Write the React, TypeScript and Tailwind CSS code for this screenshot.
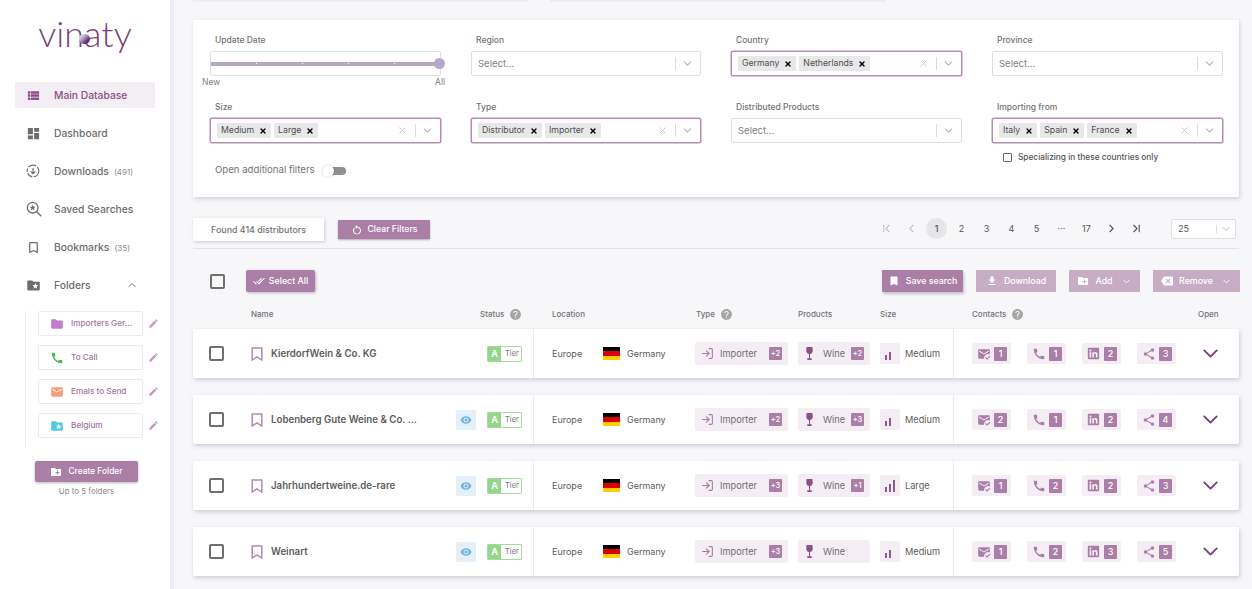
import { MdViewList, MdDashboard, MdBookmarkBorder, MdFolderSpecial, MdEdit, MdFolder, MdCall, MdEmail, MdCreateNewFolder, MdRestartAlt, MdDoneAll, MdBookmark, MdFileDownload, MdBackspace, MdVisibility, MdHelp, MdMarkEmailRead, MdShare } from 'react-icons/md'
import { FaLinkedin } from 'react-icons/fa'
import { LuChevronDown, LuChevronUp, LuChevronFirst, LuChevronLast, LuChevronLeft, LuChevronRight, LuLogIn, LuX } from 'react-icons/lu'

const FONT = "font-['Inter',sans-serif]"

function DownloadsIcon() {
  return (
    <svg width="14" height="14" viewBox="0 0 24 24" fill="none" stroke="currentColor" strokeWidth="2">
      <circle cx="12" cy="12" r="10" strokeDasharray="14 2.5 10 2.5 6 2.5" />
      <path d="M12 7v9M8 12.5l4 4 4-4" />
    </svg>
  )
}

function SavedSearchIcon() {
  return (
    <svg width="16" height="16" viewBox="0 0 24 24" fill="none" stroke="currentColor" strokeWidth="2">
      <circle cx="10" cy="10" r="8" />
      <path d="M16 16l7 7" />
      <path d="M10 5.5l1.3 3 3.2.3-2.4 2.1.7 3.1-2.8-1.6-2.8 1.6.7-3.1-2.4-2.1 3.2-.3z" fill="currentColor" stroke="none" />
    </svg>
  )
}

function WineIcon() {
  return (
    <svg className="shrink-0" width="7" height="13" viewBox="0 0 7 13" fill="#8e4f89">
      <path d="M.6 0h5.8l.4 3.4C6.9 5.4 5.4 6.7 4 6.9v4.4h1.7V13H1.3v-1.7H3V6.9C1.6 6.7.1 5.4.2 3.4z" />
    </svg>
  )
}

function SizeIcon({ large }: { large?: boolean }) {
  return (
    <div className="flex items-end gap-[2px] h-[12px]">
      <div className="w-[2px] h-[5px] bg-[#8e5a8b]" />
      <div className="w-[2px] h-[8px] bg-[#8e5a8b]" />
      <div className={large ? 'w-[2px] h-[12px] bg-[#8e5a8b]' : 'w-[2px] h-[12px] bg-transparent'} />
    </div>
  )
}

function Logo() {
  return (
    <div className="h-[82px] flex justify-center pt-[11px]">
      <div className="relative font-['Lato',sans-serif] font-light text-[36px] leading-[44px] text-[#7a3f7c]">
        vinaty
        <div className="absolute left-[41px] top-[23px] w-[11px] h-[10px] rounded-full bg-[linear-gradient(135deg,#dfe3ee_15%,#9a83ad_50%,#6a2f6e_70%)]" />
      </div>
    </div>
  )
}

function NavItem({ icon, label, count, active, right }: { icon: React.ReactNode; label: string; count?: string; active?: boolean; right?: React.ReactNode }) {
  return (
    <div className={`h-[26px] w-[140px] ml-[15px] mb-[12px] flex items-center rounded-[2px] ${active ? 'bg-[#f3edf4] text-[#8c4f88]' : 'text-[#6d6d6d]'}`}>
      <div className="w-[39px] pl-[11px] flex items-center text-[15px]">{icon}</div>
      <span className="pt-[1px] text-[10.3px] font-medium">{label}</span>
      {count && <span className="pt-[1px] ml-[5px] text-[8px] text-[#8a8a8a]">{count}</span>}
      {right}
    </div>
  )
}

function FolderItem({ icon, label }: { icon: React.ReactNode; label: string }) {
  return (
    <div className="flex items-center h-[25px] mb-[9px]">
      <div className="w-[105px] h-full border border-[#efe8f0] rounded-[2px] flex items-center pl-[11px] bg-white">
        <div className="w-[21px] text-[14px] flex items-center">{icon}</div>
        <span className="text-[8.2px] font-medium text-[#a474a0] whitespace-nowrap">{label}</span>
      </div>
      <MdEdit className="ml-[5px] text-[11px] text-[#bf9dbb]" />
    </div>
  )
}

function Sidebar() {
  return (
    <div className="w-[174px] shrink-0 h-full bg-white border-r-[4px] border-[#ecedf3] pt-0">
      <Logo />
      <NavItem active icon={<MdViewList />} label="Main Database" />
      <NavItem icon={<MdDashboard />} label="Dashboard" />
      <NavItem icon={<DownloadsIcon />} label="Downloads" count="(491)" />
      <NavItem icon={<SavedSearchIcon />} label="Saved Searches" />
      <NavItem icon={<MdBookmarkBorder />} label="Bookmarks" count="(35)" />
      <NavItem
        icon={<MdFolderSpecial />}
        label="Folders"
        right={<LuChevronUp className="ml-auto mr-[17px] text-[12px] text-[#6d6d6d]" />}
      />
      <div className="ml-[25px] mt-[13px] w-[135px] border-l border-[#ecebef] pl-[12px] h-[137px]">
        <FolderItem icon={<MdFolder className="text-[#c27dd0]" />} label="Importers Ger..." />
        <FolderItem icon={<MdCall className="text-[#4fb85c]" />} label="To Call" />
        <FolderItem icon={<MdEmail className="text-[#fb9b78]" />} label="Emals to Send" />
        <FolderItem icon={<MdFolderSpecial className="text-[#53c9e0]" />} label="Belgium" />
      </div>
      <div className="ml-[35px] mt-[13px] w-[103px] h-[21px] rounded-[2px] bg-[#aa7ea6] shadow-[0_1px_3px_rgba(0,0,0,0.3)] flex items-center justify-center gap-[6px] text-white">
        <MdCreateNewFolder className="text-[12px]" />
        <span className="text-[8.4px] font-medium">Create Folder</span>
      </div>
      <div className="ml-[35px] w-[103px] mt-[4px] text-center text-[7.9px] text-[#8a8a8a]">Up to 5 folders</div>
    </div>
  )
}

function Chip({ label }: { label: string }) {
  return (
    <div className="h-[15px] bg-[#e8e8e8] rounded-[1px] flex items-center pl-[4px] pr-[4px] text-[#4d4d4d] text-[8.7px] whitespace-nowrap">
      <span className="pt-[1px]">{label}</span>
      <LuX className="ml-[5px] text-[8px] text-black" strokeWidth={4} />
    </div>
  )
}

function SelectBox({ chips, width = 'w-full' }: { chips?: string[]; width?: string }) {
  const active = !!chips
  return (
    <div className={`${width} h-[25px] bg-white rounded-[2px] flex items-center pl-[6px] pr-[1px] border ${active ? 'border-[#b48fb1] shadow-[0_0_0_0.5px_#b48fb1]' : 'border-[#dfdfe3]'}`}>
      {active ? (
        <div className="flex gap-[3px]">{chips.map((c) => <Chip key={c} label={c} />)}</div>
      ) : (
        <span className="pt-[1px] text-[9.5px] text-[#808080]">Select...</span>
      )}
      <div className="ml-auto flex items-center">
        {active && <LuX className="text-[11px] text-[#c4c4c4] mr-[7px]" />}
        <div className="w-px h-[13px] bg-[#dcdcdc]" />
        <LuChevronDown className="mx-[5px] text-[13px] text-[#b5b5b5]" />
      </div>
    </div>
  )
}

function Field({ label, children }: { label: string; children: React.ReactNode }) {
  return (
    <div>
      <div className="h-[14px] mb-[4px] pl-[5px] text-[8.5px] leading-[14px] font-medium text-[#737373]">{label}</div>
      {children}
    </div>
  )
}

function FilterCard() {
  return (
    <div className="mt-[20px] w-[1046px] h-[177px] bg-white shadow-[1px_2px_4px_rgba(120,125,145,0.3)] pl-[17px] pt-[13px] rounded-[1px]">
      <div className="grid grid-cols-[231px_230px_231px_231px] gap-x-[30px] gap-y-[24px]">
        <Field label="Update Date">
          <div className="relative w-[231px] h-[25px] border border-[#dfdfe3] rounded-[2px] flex items-center">
            <div className="w-full h-[4px] bg-[#b6a8c6] flex items-center justify-evenly">
              <div className="w-[1px] h-[1px] bg-white" />
              <div className="w-[1px] h-[1px] bg-white" />
              <div className="w-[1px] h-[1px] bg-white" />
              <div className="w-[1px] h-[1px] bg-white" />
            </div>
            <div className="absolute -right-[5px] top-[6px] w-[11px] h-[11px] rounded-full bg-[#b6a8c6]" />
            <div className="absolute -left-[9px] top-[24px] text-[8.5px] text-[#808080]">New</div>
            <div className="absolute -right-[5px] top-[24px] text-[8.5px] text-[#808080]">All</div>
          </div>
        </Field>
        <Field label="Region"><SelectBox /></Field>
        <Field label="Country"><SelectBox chips={['Germany', 'Netherlands']} /></Field>
        <Field label="Province"><SelectBox /></Field>
        <Field label="Size"><SelectBox chips={['Medium', 'Large']} /></Field>
        <Field label="Type"><SelectBox chips={['Distributor', 'Importer']} /></Field>
        <Field label="Distributed Products"><SelectBox /></Field>
        <div>
          <Field label="Importing from"><SelectBox chips={['Italy', 'Spain', 'France']} /></Field>
          <div className="flex items-center ml-[11px] mt-[8px]">
            <div className="w-[9px] h-[9px] border border-[#6b6b6b] rounded-[1px] mr-[6px]" />
            <span className="text-[8.3px] font-medium text-[#555]">Specializing in these countries only</span>
          </div>
        </div>
      </div>
      <div className="pl-[5px] flex items-center">
        <span className="text-[9.6px] text-[#737373]">Open additional filters</span>
        <div className="relative ml-[11px] w-[20px] h-[8px] rounded-full bg-[#8f8f8f]">
          <div className="absolute -left-[4px] -top-[2px] w-[12px] h-[12px] rounded-full bg-white shadow-[0_0_2px_rgba(0,0,0,0.25)]" />
        </div>
      </div>
    </div>
  )
}

function PageNum({ children, current, muted }: { children: React.ReactNode; current?: boolean; muted?: boolean }) {
  return (
    <div className={`w-[21px] h-[21px] mr-[4px] rounded-full flex items-center justify-center text-[9px] ${current ? 'bg-[#e6e6e8] font-medium' : ''} ${muted ? 'text-[#c3c3c3]' : 'text-[#555]'}`}>
      {children}
    </div>
  )
}

function Toolbar() {
  return (
    <div className="mt-[21px] w-[1046px] h-[31px] border-b border-[#e2e3e8] flex items-start">
      <div className="w-[131px] h-[23px] bg-white shadow-[1px_1px_3px_rgba(120,125,145,0.35)] flex items-center justify-center text-[8.9px] font-medium text-[#737373]">
        Found 414 distributors
      </div>
      <div className="ml-[14px] mt-[2px] w-[92px] h-[19px] bg-[#aa7ea6] rounded-[1px] shadow-[0_1px_2px_rgba(0,0,0,0.3)] flex items-center justify-center gap-[5px] text-white">
        <MdRestartAlt className="text-[12px]" />
        <span className="text-[8.7px] font-medium">Clear Filters</span>
      </div>
      <div className="ml-auto flex items-center h-[21px]">
        <PageNum muted><LuChevronFirst className="text-[13px]" /></PageNum>
        <PageNum muted><LuChevronLeft className="text-[13px]" /></PageNum>
        <PageNum current>1</PageNum>
        <PageNum>2</PageNum>
        <PageNum>3</PageNum>
        <PageNum>4</PageNum>
        <PageNum>5</PageNum>
        <PageNum>···</PageNum>
        <PageNum>17</PageNum>
        <PageNum><LuChevronRight className="text-[13px]" /></PageNum>
        <PageNum><LuChevronLast className="text-[13px]" /></PageNum>
      </div>
      <div className="ml-[20px] mr-[3px] mt-[1px] w-[65px] h-[20px] bg-white border border-[#dfdfe3] rounded-[2px] flex items-center pl-[6px] text-[9px] text-[#555]">
        25
        <div className="ml-auto w-px h-[8px] bg-[#dcdcdc]" />
        <LuChevronDown className="mx-[3px] text-[12px] text-[#b5b5b5]" />
      </div>
    </div>
  )
}

function ActionBtn({ icon, label, w, faded, caret }: { icon: React.ReactNode; label: string; w: string; faded?: boolean; caret?: boolean }) {
  return (
    <div className={`${w} h-[22px] rounded-[1px] flex items-center justify-center gap-[6px] text-white text-[8.8px] font-medium ${faded ? 'bg-[#c6adc3]' : 'bg-[#aa7ea6] shadow-[1px_2px_3px_rgba(100,80,110,0.35)]'}`}>
      <span className="text-[12px]">{icon}</span>
      {label}
      {caret && <LuChevronDown className="ml-[2px] text-[11px]" />}
    </div>
  )
}

function Actions() {
  return (
    <div className="mt-[21px] h-[22px] w-[1047px] flex items-center">
      <div className="ml-[17px] w-[15px] h-[15px] border-2 border-[#6f6f6f] rounded-[2px]" />
      <div className="ml-[21px] w-[69px] h-[22px] rounded-[2px] bg-[#aa7ea6] shadow-[1px_1px_3px_rgba(100,80,110,0.4)] flex items-center justify-center gap-[4px] text-white text-[8.8px] font-medium">
        <MdDoneAll className="text-[12px]" />
        Select All
      </div>
      <div className="ml-auto flex gap-[13px]">
        <ActionBtn w="w-[81px]" icon={<MdBookmark />} label="Save search" />
        <ActionBtn w="w-[80px]" faded icon={<MdFileDownload />} label="Download" />
        <ActionBtn w="w-[71px]" faded caret icon={<MdCreateNewFolder />} label="Add" />
        <ActionBtn w="w-[87px]" faded caret icon={<MdBackspace />} label="Remove" />
      </div>
    </div>
  )
}

function Help() {
  return <MdHelp className="ml-[5px] text-[13px] text-[#a5a5a5]" />
}

function TableHead() {
  const cls = 'text-[8px] font-medium text-[#737373] flex items-center'
  return (
    <div className="mt-[14px] h-[16px] flex items-center">
      <div className={`${cls} ml-[58px] w-[229px]`}>Name</div>
      <div className={`${cls} w-[72px]`}>Status<Help /></div>
      <div className={`${cls} w-[144px]`}>Location</div>
      <div className={`${cls} w-[102px]`}>Type<Help /></div>
      <div className={`${cls} w-[82px]`}>Products</div>
      <div className={`${cls} w-[92px]`}>Size</div>
      <div className={`${cls} w-[226px]`}>Contacts<Help /></div>
      <div className={cls}>Open</div>
    </div>
  )
}

function Badge({ children, className = 'w-[13px] h-[13px] text-[8px]' }: { children: React.ReactNode; className?: string }) {
  return <div className={`${className} bg-[#aa7ea6] text-white rounded-[1px] flex items-center justify-center font-medium`}>{children}</div>
}

function ContactChip({ icon, n }: { icon: React.ReactNode; n: number }) {
  return (
    <div className="w-[39px] h-[21px] rounded-[2px] bg-[#f4edf4] flex items-center pl-[5px] text-[#a97ea5] text-[14px]">
      {icon}
      <Badge className="ml-auto mr-[4px] w-[13px] h-[14px] text-[9px]">{n}</Badge>
    </div>
  )
}

type Row = { name: string; viewed?: boolean; imp: string; wine?: string; size: string; c: number[] }

function TableRow({ r }: { r: Row }) {
  return (
    <div className="w-[1046px] h-[49px] mb-[17px] bg-white rounded-[2px] shadow-[1px_2px_4px_rgba(120,125,145,0.35)] flex items-center">
      <div className="ml-[16px] w-[15px] h-[15px] border-2 border-[#6f6f6f] rounded-[2px] shrink-0" />
      <svg className="ml-[27px] shrink-0" width="12" height="14" viewBox="0 0 12 14" fill="none" stroke="#b48ab1" strokeWidth="1.5">
        <path d="M1.2 1h9.6v12L6 9.8 1.2 13z" />
      </svg>
      <div className="ml-[8px] pt-[1px] w-[185px] shrink-0 text-[9.7px] font-semibold text-[#5c5c5c] whitespace-nowrap">{r.name}</div>
      <div className="w-[20px] shrink-0">
        {r.viewed && (
          <div className="w-[20px] h-[20px] bg-[#e3f0f9] rounded-[1px] flex items-center justify-center text-[12px] text-[#6fb3e0]">
            <MdVisibility />
          </div>
        )}
      </div>
      <div className="ml-[11px] w-[35px] h-[16px] shrink-0 border border-[#a6dba0] rounded-[1px] flex items-center bg-white">
        <div className="w-[13px] h-full bg-[#94d68c] text-white text-[9px] font-bold flex items-center justify-center">A</div>
        <span className="ml-[4px] text-[7.5px] text-[#777]">Tier</span>
      </div>
      <div className="ml-[11px] w-px h-full bg-[#ebebee] shrink-0" />
      <div className="ml-[18px] w-[51px] shrink-0 text-[9px] text-[#5c5c5c]">Europe</div>
      <div className="w-[17px] h-[13px] shrink-0 flex flex-col">
        <div className="flex-1 bg-black" />
        <div className="flex-1 bg-[#dd0000]" />
        <div className="flex-1 bg-[#ffce00]" />
      </div>
      <div className="ml-[7px] w-[68px] shrink-0 text-[9px] text-[#5c5c5c]">Germany</div>
      <div className="w-[93px] h-[23px] shrink-0 rounded-[2px] bg-[#f4edf4] flex items-center pl-[6px]">
        <LuLogIn className="text-[13px] text-[#a97ea5]" />
        <span className="ml-[6px] text-[9.2px] text-[#6d6d6d]">Importer</span>
        <Badge className="ml-auto mr-[6px] w-[13px] h-[13px] text-[7.5px]">{r.imp}</Badge>
      </div>
      <div className="ml-[10px] w-[72px] h-[23px] shrink-0 rounded-[2px] bg-[#f4edf4] flex items-center pl-[8px]">
        <WineIcon />
        <span className="ml-[10px] text-[9.2px] text-[#6d6d6d]">Wine</span>
        {r.wine && <Badge className="ml-auto mr-[6px] w-[13px] h-[13px] text-[7.5px]">{r.wine}</Badge>}
      </div>
      <div className="ml-[10px] w-[20px] h-[21px] shrink-0 rounded-[2px] bg-[#f4edf4] flex items-center justify-center">
        <SizeIcon large={r.size === 'Large'} />
      </div>
      <div className="ml-[5px] w-[48px] shrink-0 text-[9.2px] text-[#5c5c5c]">{r.size}</div>
      <div className="w-px h-full bg-[#ebebee] shrink-0" />
      <div className="ml-[18px] flex gap-[16px] shrink-0">
        <ContactChip icon={<MdMarkEmailRead />} n={r.c[0]} />
        <ContactChip icon={<MdCall />} n={r.c[1]} />
        <ContactChip icon={<FaLinkedin className="text-[13px]" />} n={r.c[2]} />
        <ContactChip icon={<MdShare />} n={r.c[3]} />
      </div>
      <LuChevronDown className="ml-[22px] text-[25px] text-[#7a3f7c] shrink-0" strokeWidth={1.8} />
    </div>
  )
}

const ROWS: Row[] = [
  { name: 'KierdorfWein & Co. KG', imp: '+2', wine: '+2', size: 'Medium', c: [1, 1, 2, 3] },
  { name: 'Lobenberg Gute Weine & Co. ...', viewed: true, imp: '+2', wine: '+3', size: 'Medium', c: [2, 1, 2, 4] },
  { name: 'Jahrhundertweine.de-rare', viewed: true, imp: '+3', wine: '+1', size: 'Large', c: [1, 2, 2, 3] },
  { name: 'Weinart', viewed: true, imp: '+3', size: 'Medium', c: [1, 2, 3, 5] },
]

export default function App() {
  return (
    <div className={`${FONT} w-[1252px] h-[589px] overflow-hidden flex bg-[#f7f7fa]`}>
      <Sidebar />
      <div className="pl-[19px] flex-1 relative">
        <div className="absolute top-0 left-[19px] w-[336px] h-[2px] bg-[#eceef2]" />
        <div className="absolute top-0 left-[376px] w-[336px] h-[2px] bg-[#eceef2]" />
        <FilterCard />
        <Toolbar />
        <Actions />
        <TableHead />
        <div className="mt-[7px]">
          {ROWS.map((r) => <TableRow key={r.name} r={r} />)}
        </div>
      </div>
    </div>
  )
}
